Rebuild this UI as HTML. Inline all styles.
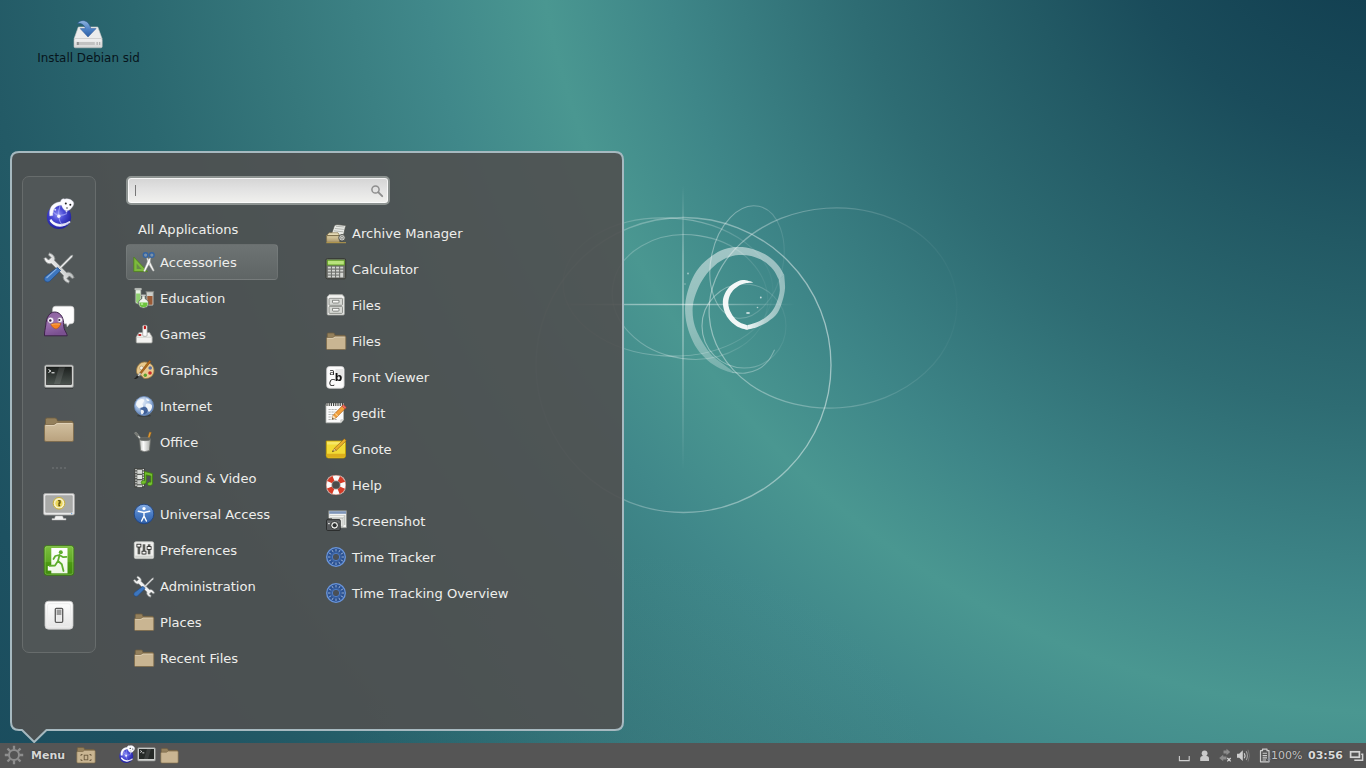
<!DOCTYPE html>
<html lang="en">
<head>
<meta charset="utf-8">
<title>Cinnamon Desktop</title>
<style>
*{box-sizing:border-box;margin:0;padding:0}
html,body{width:1366px;height:768px;overflow:hidden}
body{font-family:"DejaVu Sans","Liberation Sans",sans-serif;font-size:13.33px;color:#e8e8e8;position:relative;background:#2f6f76}
svg{position:absolute;overflow:visible}
#wall{position:absolute;left:0;top:0;width:1366px;height:768px;
 background:
  radial-gradient(ellipse 300px 240px at 640px 790px, rgba(100,170,165,0.13), rgba(100,170,165,0) 100%),
  radial-gradient(circle 1700px at 1402px -158px, #103b4d 0px, #134152 162px, #1a4c5b 300px, #225964 404px, #2e6c73 569px, #3e8688 751px, #4a9791 871px, #40888a 989px, #36787c 1134px, #2b6870 1280px, #235a66 1427px, #1d5161 1560px, #1a4c5d 1700px);
}
.dlabel{position:absolute;left:28.5px;top:50px;width:120px;text-align:center;color:#07151c;font-size:11.9px;line-height:16px}
#panel{position:absolute;left:0;top:743px;width:1366px;height:25px;background:#555555}
#fav{position:absolute;left:22px;top:176px;width:74px;height:477px;border:1px solid #676c6c;border-radius:7px;background:rgba(255,255,255,0.035)}
#search{position:absolute;left:126px;top:176px;width:264px;height:28.5px;border:2px solid #8d9391;border-radius:5px;background:linear-gradient(#d4d4d4,#e2e2e2 45%,#f1f1ee);box-shadow:inset 0 0 0 1px rgba(255,255,255,0.75)}
.cat,.app{position:absolute;height:35px;line-height:35px;font-size:13.1px;color:#eeeeec;white-space:nowrap}
.cat{left:160px}
.app{left:352px}
.sel{position:absolute;left:126px;top:244px;width:152px;height:36px;border:1px solid rgba(255,255,255,0.07);border-radius:4px;background:linear-gradient(#6d7373,#5f6565)}
.ptxt{position:absolute;top:749.3px;font-size:11px;line-height:14px;color:#dcdcdc;white-space:nowrap;text-shadow:0 0 2px rgba(0,0,0,0.55)}
</style>
</head>
<body>
<div id="wall"></div>
<svg id="wallsvg" style="left:0;top:0" width="1366" height="768" viewBox="0 0 1366 768" fill="none" stroke="#fff">
<defs>
<linearGradient id="vl" x1="0" y1="0" x2="0" y2="1"><stop offset="0" stop-color="#fff" stop-opacity="0"/><stop offset="0.25" stop-color="#fff" stop-opacity="0.4"/><stop offset="0.42" stop-color="#fff" stop-opacity="0.5"/><stop offset="1" stop-color="#fff" stop-opacity="0"/></linearGradient>
<linearGradient id="hl" x1="0" y1="0" x2="1" y2="0"><stop offset="0" stop-color="#fff" stop-opacity="0"/><stop offset="0.3" stop-color="#fff" stop-opacity="0.4"/><stop offset="0.55" stop-color="#fff" stop-opacity="0.5"/><stop offset="1" stop-color="#fff" stop-opacity="0"/></linearGradient>
<linearGradient id="g1" gradientUnits="userSpaceOnUse" x1="536" y1="0" x2="832" y2="0"><stop offset="0" stop-color="#fff" stop-opacity="0.12"/><stop offset="0.5" stop-color="#fff" stop-opacity="0.32"/><stop offset="1" stop-color="#fff" stop-opacity="0.5"/></linearGradient>
<linearGradient id="g2" gradientUnits="userSpaceOnUse" x1="709" y1="0" x2="957" y2="0"><stop offset="0" stop-color="#fff" stop-opacity="0.42"/><stop offset="0.5" stop-color="#fff" stop-opacity="0.22"/><stop offset="1" stop-color="#fff" stop-opacity="0.02"/></linearGradient>
<linearGradient id="g3" gradientUnits="userSpaceOnUse" x1="560" y1="0" x2="775" y2="0"><stop offset="0" stop-color="#fff" stop-opacity="0.1"/><stop offset="0.6" stop-color="#fff" stop-opacity="0.3"/><stop offset="1" stop-color="#fff" stop-opacity="0.02"/></linearGradient>
<linearGradient id="g6" gradientUnits="userSpaceOnUse" x1="747" y1="0" x2="782" y2="0"><stop offset="0" stop-color="#fff" stop-opacity="0.93"/><stop offset="0.5" stop-color="#fff" stop-opacity="0.6"/><stop offset="1" stop-color="#fff" stop-opacity="0.45"/></linearGradient>
<linearGradient id="g4" gradientUnits="userSpaceOnUse" x1="705" y1="0" x2="790" y2="0"><stop offset="0" stop-color="#fff" stop-opacity="0.4"/><stop offset="0.6" stop-color="#fff" stop-opacity="0.22"/><stop offset="1" stop-color="#fff" stop-opacity="0.03"/></linearGradient>
<linearGradient id="g5" gradientUnits="userSpaceOnUse" x1="0" y1="250" x2="0" y2="372"><stop offset="0" stop-color="#fff" stop-opacity="0.5"/><stop offset="0.6" stop-color="#fff" stop-opacity="0.4"/><stop offset="1" stop-color="#fff" stop-opacity="0.25"/></linearGradient>
</defs>
<rect x="682.3" y="185" width="1.4" height="285" fill="url(#vl)" stroke="none"/>
<rect x="560" y="303.8" width="235" height="1.4" fill="url(#hl)" stroke="none"/>
<circle cx="683.5" cy="365" r="147.5" stroke-width="1.3" stroke="url(#g1)"/>
<ellipse cx="833" cy="308" rx="124" ry="100" stroke-width="1.2" stroke="url(#g2)" transform="rotate(-4 833 308)"/>
<ellipse cx="668" cy="287" rx="105" ry="69" stroke-width="1.1" stroke="url(#g3)" transform="rotate(3 668 287)"/>
<ellipse cx="690" cy="297" rx="78" ry="62" stroke-width="1.1" stroke="url(#g3)" transform="rotate(8 690 297)"/>
<ellipse cx="747" cy="262" rx="36" ry="57" stroke-width="1.1" stroke="url(#g4)" transform="rotate(12 747 262)"/>
<circle cx="744" cy="326" r="42" stroke-width="1.1" stroke="url(#g4)"/>
<path d="M784.2 274.8 C783.2 273.2 781 268.5 778.3 265.4 C775.6 262.3 772.1 258.8 767.9 256 C763.8 253.3 758.2 250.7 753.3 249.2 C748.5 247.7 743.6 247.1 738.8 247.1 C733.9 247.1 728.7 247.7 724.2 249.2 C719.7 250.7 715.8 253 711.7 256 C707.5 259.1 702.6 263.2 699.2 267.5 C695.7 271.8 693.1 276.5 690.8 282.1 C688.6 287.6 686.5 294.9 685.6 300.8 C684.8 306.7 684.9 311.9 685.6 317.5 C686.3 323.1 687.9 329 689.8 334.2 C691.7 339.4 694.1 344.4 697.1 348.8 C700 353.1 703.7 356.9 707.5 360.2 C711.3 363.5 715.7 366.4 720 368.5 C724.3 370.7 731.3 372.5 733.5 373.3 L733.5 371.7 C731.6 370.3 725.7 366.1 722.1 363.3 C718.4 360.6 714.8 358.3 711.7 355 C708.5 351.7 705.8 347.4 703.3 343.5 C700.9 339.7 698.8 336.1 697.1 332.1 C695.4 328.1 694 324.1 693.3 319.6 C692.6 315.1 692.3 309.9 692.9 305 C693.5 300.1 695.2 295.1 697.1 290.4 C699 285.7 701.4 281 704.4 276.9 C707.3 272.7 711.1 268.5 714.8 265.4 C718.4 262.3 722.3 259.9 726.2 258.1 C730.2 256.4 734.6 255.3 738.8 255 C742.9 254.7 747.1 255 751.2 256 C755.4 257.1 760.1 259 763.8 261.2 C767.4 263.5 770.6 266.5 773.1 269.6 C775.6 272.6 777.8 277.9 778.8 279.6 Z" fill="url(#g5)" stroke="none"/>
<path d="M784.2 274.8 C784.3 277 785.3 284 785 288.3 C784.7 292.7 783.8 296.7 782.5 300.8 C781.2 305 779.7 309.9 777.3 313.3 C774.9 316.8 771.2 319.4 767.9 321.7 C764.6 323.9 761 325.6 757.5 326.9 C754 328.2 748.8 329.1 747.1 329.6 L747.5 325 C748.8 324.6 752.5 323.9 755.4 322.7 C758.3 321.5 761.9 320 764.8 317.9 C767.7 315.8 770.6 313.1 772.7 310.2 C774.8 307.4 776.1 304.1 777.3 300.8 C778.5 297.5 779.5 294 779.8 290.4 C780 286.9 778.9 281.4 778.8 279.6 Z" fill="url(#g6)" stroke="none"/>
<path d="M747.5 330 C745.7 329.4 739.9 328.2 736.7 326.2 C733.5 324.3 730.5 321.4 728.3 318.5 C726.2 315.7 724.6 312.5 723.8 309.2 C722.9 305.9 722.5 302 723.1 298.8 C723.7 295.5 725.4 292 727.3 289.4 C729.2 286.8 732 284.7 734.6 283.1 C737.2 281.6 739.9 280.2 742.9 280 C746 279.8 751.2 281.7 752.9 282.1 L752.9 282.5 C751.5 282.7 746.8 282.9 744.4 283.5 C741.9 284.2 740.2 284.9 738.1 286.2 C736 287.6 733.4 289.8 731.9 291.9 C730.3 294 729.3 296.2 728.8 298.8 C728.2 301.3 728.1 304.3 728.8 307.1 C729.4 309.9 730.8 312.9 732.5 315.4 C734.2 317.9 736.7 320.4 739.2 322.1 C741.7 323.8 746.1 324.9 747.5 325.4 Z" fill="#fff" fill-opacity="0.93" stroke="none"/>
<path d="M732.5 372.3 C734.6 372.4 740.8 373.6 745 373.1 C749.2 372.7 753.7 371.6 757.5 369.6 C761.3 367.6 765.1 364.5 767.9 361.2 C770.8 358 773.5 351.7 774.6 349.8" stroke-width="1.1" stroke-opacity="0.3"/>
<circle cx="760.8" cy="297.5" r="0.9" fill="#fff" fill-opacity="0.7" stroke="none"/><circle cx="757.5" cy="307.5" r="0.8" fill="#fff" fill-opacity="0.6" stroke="none"/><ellipse cx="748" cy="313" rx="2" ry="0.9" fill="#fff" fill-opacity="0.7" stroke="none"/><circle cx="688" cy="273.5" r="0.9" fill="#fff" fill-opacity="0.5" stroke="none"/><circle cx="685" cy="284" r="0.8" fill="#fff" fill-opacity="0.4" stroke="none"/>
</svg>
<!-- desktop icon -->
<svg style="left:72px;top:18px" width="32" height="32" viewBox="0 0 32 32">
 <defs><linearGradient id="dr1" x1="0" y1="0" x2="0" y2="1"><stop offset="0" stop-color="#f3f3f3"/><stop offset="1" stop-color="#d4d4d4"/></linearGradient>
 <linearGradient id="ar1" x1="0" y1="0" x2="0" y2="1"><stop offset="0" stop-color="#8fb4de"/><stop offset="0.55" stop-color="#4a7fc4"/><stop offset="1" stop-color="#2d5fa3"/></linearGradient></defs>
 <path d="M6.3 9 H25.8 L30.2 21 H2 Z" fill="#ececec" stroke="#c8c8c8" stroke-width="0.6"/>
 <rect x="2" y="20.6" width="28.2" height="9.2" rx="1.3" fill="url(#dr1)" stroke="#bdbdbd" stroke-width="0.6"/>
 <rect x="4.8" y="24" width="18" height="3" fill="#c2c2c2"/><rect x="4.8" y="24" width="2" height="3" fill="#8e8e8e"/>
 <rect x="24.5" y="24" width="1.3" height="3" fill="#b0b0b0"/><rect x="27" y="24" width="1.3" height="3" fill="#b0b0b0"/>
 <path d="M5.4 5.4 C8 1.5 16.5 0.5 18.8 10.6 H24.1 L16 19 L8.2 10.6 H13.3 C12.5 6.5 9 5 5.4 5.4 Z" fill="url(#ar1)" stroke="#2a5594" stroke-width="0.5"/>
</svg>
<div class="dlabel">Install Debian sid</div>
<!-- menu -->
<svg style="left:0;top:0" width="640" height="768" viewBox="0 0 640 768">
 <path d="M19 152 H615 Q623 152 623 160 V722 Q623 730 615 730 H46.5 L34.2 742 L22 730 H19 Q11 730 11 722 V160 Q11 152 19 152 Z" fill="rgba(80,80,80,0.9)" stroke="#a6b9c0" stroke-width="2" stroke-linejoin="round"/>
</svg>
<div id="fav"></div>
<div id="search"></div>
<div style="position:absolute;left:135px;top:185px;width:1px;height:11px;background:#777"></div>
<svg style="left:370px;top:184px" width="14" height="14" viewBox="0 0 14 14">
 <circle cx="5.5" cy="5.5" r="3.6" fill="none" stroke="#8e8e8e" stroke-width="1.5"/>
 <path d="M8.2 8.2 L12.2 12.2" stroke="#8e8e8e" stroke-width="1.9" stroke-linecap="round"/>
</svg>
<div class="sel"></div>
<!-- favourites -->
<svg style="left:43px;top:196px" width="32" height="36" viewBox="0 0 32 36">
 <defs><radialGradient id="gl1" cx="0.45" cy="0.4" r="0.65"><stop offset="0" stop-color="#8d8ff2"/><stop offset="0.4" stop-color="#4a4bd6"/><stop offset="1" stop-color="#1a1a96"/></radialGradient></defs>
 <circle cx="16" cy="20.9" r="12.2" fill="url(#gl1)"/>
 <path d="M6.5 24 C9 30.5 18 33.5 27 27 C20 31 12 29.5 8.5 23 Z" fill="#eef0ff" opacity="0.95"/>
 <path d="M8 25 C13 30 21 30 26.5 26" stroke="#fff" stroke-width="1.8" fill="none" opacity="0.85" stroke-linecap="round"/>
 <path d="M9 14 C12 19 17 21 24 17.5 M17 10 C14.5 17 15.5 24 19 29" stroke="#b9bcff" stroke-width="1.1" fill="none" opacity="0.6"/>
 <circle cx="15.8" cy="20.3" r="1.7" fill="#fff" opacity="0.9"/><circle cx="12.2" cy="13.8" r="1" fill="#fff" opacity="0.8"/><circle cx="23.5" cy="15.5" r="0.9" fill="#fff" opacity="0.8"/>
 <path d="M6.8 20 C5.5 12 9.5 6.5 17.5 5.8 C18 3.5 20 2 21.8 3.2 C24 2.2 27.5 3 29.5 5 C31.5 6.5 31 9.5 28.5 12 C26.5 14.5 23.5 15.5 21.5 14 C19.5 12.5 19 10.5 18.5 9.2 C13.5 9 9.5 12.5 9.8 19.5 Z" fill="#fbfbff" stroke="#d4d4e6" stroke-width="0.4"/>
 <circle cx="22.8" cy="7.6" r="1" fill="#222"/><circle cx="27.3" cy="8.7" r="1" fill="#222"/><ellipse cx="24" cy="12" rx="0.9" ry="0.7" fill="#555"/>
</svg>
<svg style="left:43px;top:251px" width="32" height="32" viewBox="0 0 32 32">
 <defs><linearGradient id="mt1" x1="0" y1="0" x2="1" y2="1"><stop offset="0" stop-color="#fdfdfd"/><stop offset="1" stop-color="#b9bdbd"/></linearGradient></defs>
 <g transform="rotate(-45 16 17)">
  <path d="M13.8 8.5 C11.5 7.5 10.8 5 11.2 2.5 L12 -0.5 L14.2 0.3 V4 H17.8 V0.3 L20 -0.5 L20.8 2.5 C21.2 5 20.5 7.5 18.2 8.5 V25.5 C20.5 26.5 21.2 29 20.8 31.5 L20 34.5 L17.8 33.7 V30 H14.2 V33.7 L12 34.5 L11.2 31.5 C10.8 29 11.5 26.5 13.8 25.5 Z" fill="url(#mt1)" stroke="#858989" stroke-width="0.8" stroke-linejoin="round"/>
 </g>
 <path d="M29.8 4 L28 4.6 L15.2 17.4 L16.6 18.8 L29.4 6 Z" fill="#eeeeee" stroke="#8c9090" stroke-width="0.6"/>
 <path d="M14.4 16.4 L17.6 19.6 L7 30 C5.5 31.4 3.2 31.2 2 29.9 C0.8 28.5 1 26.5 2.5 25.2 Z" fill="#3d76be" stroke="#204a87" stroke-width="0.7"/>
 <path d="M3.5 27 L13.5 17.8" stroke="#9cc0ec" stroke-width="1.1" opacity="0.8"/>
</svg>
<svg style="left:43px;top:305px" width="32" height="32" viewBox="0 0 32 32">
 <defs><linearGradient id="pg1" x1="0" y1="0" x2="0.3" y2="1"><stop offset="0" stop-color="#8a5e9c"/><stop offset="0.5" stop-color="#9a70ae"/><stop offset="1" stop-color="#7a5090"/></linearGradient></defs>
 <path d="M12.6 1.2 H28 Q31 1.2 31 4.2 V15.8 Q31 18.8 28 18.8 H26.6 L24.2 21.8 L23.6 18.8 H12.6 Q9.6 18.8 9.6 15.8 V4.2 Q9.6 1.2 12.6 1.2 Z" fill="#fdfdfd" stroke="#cfcfcf" stroke-width="0.6"/>
 <path d="M1.5 30.8 C1.3 27 2.3 24 2.8 20 C3.2 12.5 6.5 7 11.5 7 C16.5 7 20 11 20.6 17.5 C20.8 20.5 20.5 22.5 22 25.5 C23 27.5 24 29 24.2 30.8 Z" fill="url(#pg1)" stroke="#3c2248" stroke-width="1"/>
 <circle cx="7.7" cy="15.3" r="3.1" fill="#fbf4ff" stroke="#5e3c6c" stroke-width="0.4"/><circle cx="17" cy="14.9" r="2.6" fill="#fbf4ff" stroke="#5e3c6c" stroke-width="0.4"/>
 <circle cx="7.3" cy="15.4" r="1.25" fill="#3a2344"/><circle cx="16.3" cy="15" r="1.1" fill="#3a2344"/>
 <path d="M7.8 19.3 C10 18 15 17.8 17.8 18.6 C17 21.5 15 23.6 13 24 C10.5 23.5 8.5 21.5 7.8 19.3 Z" fill="#f58220" stroke="#a8500a" stroke-width="0.5"/>
 <path d="M8.6 19.6 C11 18.9 15 18.8 17 19.2" stroke="#fbb060" stroke-width="0.9" fill="none"/>
</svg>
<svg style="left:43px;top:360px" width="32" height="32" viewBox="0 0 32 32">
 <defs><linearGradient id="tm1" x1="0" y1="0" x2="0" y2="1"><stop offset="0" stop-color="#1c201e"/><stop offset="1" stop-color="#4a524e"/></linearGradient></defs>
 <rect x="2" y="27.6" width="28" height="1.5" rx="0.7" fill="#000" opacity="0.3"/>
 <rect x="1.6" y="5" width="28.8" height="22.6" rx="1.8" fill="#d6d8d6" stroke="#8a8c8a" stroke-width="0.8"/>
 <rect x="3.6" y="7" width="24.8" height="17.4" fill="url(#tm1)" stroke="#111" stroke-width="0.6"/>
 <path d="M16 7.3 L22 7.3 L17 24 L11 24 Z" fill="#fff" opacity="0.1"/>
 <path d="M5.5 9.5 L7.8 11 L5.5 12.5" stroke="#fff" stroke-width="1" fill="none"/><rect x="8.5" y="12.3" width="3" height="1" fill="#fff"/>
</svg>
<svg style="left:43px;top:414px" width="32" height="32" viewBox="0 0 32 32">
 <defs><linearGradient id="fd1" x1="0" y1="0" x2="0" y2="1"><stop offset="0" stop-color="#d2c0a0"/><stop offset="1" stop-color="#b9a27e"/></linearGradient></defs>
 <path d="M2.5 5.5 Q2.5 4 4 4 H12 Q13.5 4 14 5.5 L14.5 7 H28.5 Q30 7 30 8.5 V12 H2.5 Z" fill="#94805c" stroke="#6f5d3f" stroke-width="0.8"/>
 <path d="M1.5 12 Q1.5 10.5 3 10.5 H11 L14 8.5 H29 Q30.5 8.5 30.5 10 V26 Q30.5 27.5 29 27.5 H3 Q1.5 27.5 1.5 26 Z" fill="url(#fd1)" stroke="#7d6a49" stroke-width="0.8"/>
 <path d="M2.5 12 Q2.5 11.5 3 11.5 H11.3 L14.3 9.5 H29 Q29.5 9.5 29.5 10" stroke="#e6dac2" stroke-width="0.7" fill="none"/>
</svg>

<svg style="left:43px;top:489px" width="32" height="32" viewBox="0 0 32 32">
 <rect x="0.6" y="4.6" width="30.8" height="21.4" rx="1.5" fill="#e9e9e9" stroke="#a4a4a4" stroke-width="0.8"/>
 <rect x="2.8" y="6.8" width="26.4" height="16.4" fill="#a9aaa8" stroke="#8a8a8a" stroke-width="0.5"/>
 <circle cx="28.7" cy="24.6" r="0.6" fill="#4a90d9"/>
 <path d="M12.5 27 H19.5 L20.5 29.5 H23 V31 H9 V29.5 H11.5 Z" fill="#f2f2f2" stroke="#b0b0b0" stroke-width="0.5"/>
 <circle cx="16" cy="14.3" r="5.8" fill="#f6f0c8" stroke="#c9b037" stroke-width="1"/>
 <circle cx="16" cy="14.3" r="3.6" fill="#ead55a"/>
 <path d="M15 11.8 H17 V14 H16 V16.8 H17.2" stroke="#4a3d00" stroke-width="1.1" fill="none"/>
</svg>
<svg style="left:43px;top:544px" width="32" height="32" viewBox="0 0 32 32">
 <defs><linearGradient id="lo1" x1="0" y1="0" x2="0" y2="1"><stop offset="0" stop-color="#7cc03e"/><stop offset="0.55" stop-color="#5ea824"/><stop offset="0.57" stop-color="#4c9a12"/><stop offset="1" stop-color="#3f8a0e"/></linearGradient>
 <linearGradient id="lo2" x1="0" y1="0" x2="0" y2="1"><stop offset="0" stop-color="#ffffff"/><stop offset="1" stop-color="#eef6e6"/></linearGradient></defs>
 <rect x="1.2" y="1.7" width="29.6" height="29.6" rx="2.5" fill="url(#lo1)" stroke="#3a7a10" stroke-width="0.8"/>
 <rect x="2.2" y="2.7" width="27.6" height="27.6" rx="1.8" fill="none" stroke="#a8dc78" stroke-width="0.7" opacity="0.6"/>
 <rect x="8.3" y="4" width="16.2" height="25.3" fill="url(#lo2)"/>
 <rect x="4.8" y="22" width="4.5" height="4.6" fill="#f6faf2"/>
 <circle cx="17.8" cy="8.3" r="2" fill="#5fae2e"/>
 <path d="M16.3 11 L12.3 12 L10.5 15 M16.3 11 L20.3 13.2 L23.5 12.8 M16.5 11.2 L15 17 L18.8 20.2 L20.5 27 M15 17 L12 21.5 L6.5 21.8" stroke="#5fae2e" stroke-width="1.8" fill="none" stroke-linecap="round" stroke-linejoin="round"/>
</svg>
<svg style="left:43px;top:599px" width="32" height="32" viewBox="0 0 32 32">
 <defs><linearGradient id="sd1" x1="0" y1="0" x2="0" y2="1"><stop offset="0" stop-color="#ffffff"/><stop offset="1" stop-color="#e4e4e4"/></linearGradient></defs>
 <rect x="2" y="2.2" width="28" height="28" rx="3.5" fill="url(#sd1)" stroke="#c6c6c6" stroke-width="0.8"/>
 <rect x="4.5" y="4.7" width="23" height="23" rx="2" fill="none" stroke="#ededed" stroke-width="1"/>
 <rect x="12.3" y="9.3" width="7.4" height="14" rx="1" fill="#f6f6f6" stroke="#5a5a5a" stroke-width="1.3"/>
 <rect x="13.6" y="10.6" width="4.8" height="5.5" fill="#9a9a9a"/>
 <rect x="13.6" y="16.1" width="4.8" height="5.9" fill="#e9e9e9"/>
</svg>

<div style="position:absolute;left:52px;top:467px;width:15px;height:2px;background:repeating-linear-gradient(90deg,rgba(255,255,255,0.1) 0 2px,transparent 2px 4px)"></div>
<!-- category icons -->
<svg style="left:133px;top:251px" width="22" height="22" viewBox="0 0 22 22">
 <path d="M0.8 20.6 V6 L14.6 20.6 Z" fill="#7cba3c" stroke="#4e7f1c" stroke-width="0.8" stroke-linejoin="round"/>
 <path d="M3.6 17.9 V12.6 L8.6 17.9 Z" fill="#5a6a52" opacity="0.6"/>
 <path d="M13.6 6.2 L15.9 8.2 L21.3 19.4 L20 20.3 L14.5 11.5 Z" fill="#f4f4f2" stroke="#9a9c98" stroke-width="0.5"/>
 <path d="M17.8 6.2 L15.5 8.2 L10.5 20 L11.9 20.8 L17 11.5 Z" fill="#ffffff" stroke="#9a9c98" stroke-width="0.5"/>
 <circle cx="12.6" cy="4.1" r="2.3" fill="#8fb3e0" fill-opacity="0.5" stroke="#3465a4" stroke-width="1.4"/>
 <circle cx="18.8" cy="4.1" r="2.3" fill="#8fb3e0" fill-opacity="0.5" stroke="#3465a4" stroke-width="1.4"/>
</svg>
<svg style="left:133px;top:287px" width="22" height="22" viewBox="0 0 22 22">
 <path d="M12.8 4.8 H21 L20.3 5.8 V17 Q20.3 18.5 18.8 18.5 H15 Q13.5 18.5 13.5 17 V5.8 Z" fill="#e4e6e2" fill-opacity="0.85" stroke="#8a8d88" stroke-width="0.8"/>
 <path d="M14.3 9 H19.5 V16.8 Q19.5 17.7 18.6 17.7 H15.2 Q14.3 17.7 14.3 16.8 Z" fill="#9a5a36"/>
 <path d="M2.3 2.3 H8 V14.5 Q8 17 5.15 17 Q2.3 17 2.3 14.5 Z" fill="#e8f2e4" stroke="#7a7e7a" stroke-width="0.8"/>
 <path d="M3.1 6.5 H7.2 V14.4 Q7.2 16.2 5.15 16.2 Q3.1 16.2 3.1 14.4 Z" fill="#8fd070"/>
 <rect x="1.6" y="1.2" width="7.1" height="1.6" rx="0.6" fill="#f4f7f4" stroke="#7a7e7a" stroke-width="0.5"/>
 <path d="M8.8 8.2 H12.2 V11.8 C15 13 16 15.5 15.3 17.8 C14.5 20 12.5 21 10.5 21 C8.5 21 6.5 20 5.7 17.8 C5 15.5 6 13 8.8 11.8 Z" fill="#eef4ec" stroke="#5e635f" stroke-width="0.8"/>
 <path d="M6.5 15.5 H14.5 C14.9 17 14.3 18.6 13.3 19.4 C12.5 20 11.5 20.2 10.5 20.2 C9.5 20.2 8.5 20 7.7 19.4 C6.7 18.6 6.1 17 6.5 15.5 Z" fill="#6cc43e"/>
 <ellipse cx="9" cy="17" rx="1.3" ry="0.9" fill="#c6f0a8" opacity="0.8"/>
 <rect x="8.1" y="7.5" width="4.8" height="1.4" rx="0.5" fill="#f6f8f6" stroke="#5e635f" stroke-width="0.5"/>
</svg>
<svg style="left:133px;top:323px" width="22" height="22" viewBox="0 0 22 22">
 <path d="M3.2 14 L6 9.5 H16.5 L19.2 14 V19 Q19.2 20 18.2 20 H4.2 Q3.2 20 3.2 19 Z" fill="#f3f3f1" stroke="#9a9c98" stroke-width="0.8"/>
 <path d="M3.6 14.2 H18.8" stroke="#c9cbc7" stroke-width="0.8"/>
 <rect x="9.7" y="2.3" width="4.4" height="11" rx="1.2" fill="#fafafa" stroke="#9a9c98" stroke-width="0.7"/>
 <rect x="10.8" y="2.8" width="2.2" height="3.4" rx="0.9" fill="#c01818"/>
 <ellipse cx="6.8" cy="12" rx="1.7" ry="1.1" fill="#b21818"/>
</svg>
<svg style="left:133px;top:359px" width="22" height="22" viewBox="0 0 22 22">
 <path d="M11.5 3 C17 3 21 6.5 21 11.5 C21 16.5 17 19.5 12.5 19.5 C9.5 19.5 9.8 17.2 8 16.5 C6 15.8 3.5 16 3.5 12 C3.5 7 7 3 11.5 3 Z" fill="#e9c98e" stroke="#9c7a3c" stroke-width="0.8"/>
 <circle cx="8.5" cy="9" r="1.9" fill="#f4f0e6" stroke="#9c7a3c" stroke-width="0.5"/>
 <circle cx="17.2" cy="9" r="1.8" fill="#5a6f9e"/>
 <circle cx="17" cy="14" r="1.8" fill="#cc2a2a"/>
 <circle cx="12.3" cy="16.2" r="1.7" fill="#5aa02c"/>
 <circle cx="13.5" cy="6.2" r="1.5" fill="#e6d04a"/>
 <path d="M16.5 1.2 L18 2.4 L8.2 14.8 L6.8 13.8 Z" fill="#b3691f" stroke="#6e3f0f" stroke-width="0.5"/>
 <path d="M8.2 14.8 L6.8 13.8 L4.5 16.5 L5.8 17.5 Z" fill="#cfd2cf" stroke="#777" stroke-width="0.4"/>
 <path d="M5.8 17.5 L4.5 16.5 C3 17.5 2.5 19.2 0.8 19.8 C3 20.5 5 19.5 5.8 17.5 Z" fill="#222"/>
</svg>
<svg style="left:133px;top:395px" width="22" height="22" viewBox="0 0 22 22">
 <defs><radialGradient id="in1" cx="0.4" cy="0.3" r="0.75"><stop offset="0" stop-color="#e4ecf8"/><stop offset="0.55" stop-color="#9db8de"/><stop offset="1" stop-color="#4a6ea8"/></radialGradient></defs>
 <ellipse cx="11" cy="20.8" rx="7" ry="1" fill="#000" opacity="0.25"/>
 <circle cx="11" cy="11" r="9.5" fill="url(#in1)" stroke="#6f8fc0" stroke-width="0.8"/>
 <path d="M7.5 13 C9 11 13 11.5 14.5 13.5 C15.5 16 13.5 19 11 19.3 C9 18 7 15.5 7.5 13 Z" fill="#34558f" opacity="0.85"/>
 <path d="M5 5.5 C7 4 9.5 3.5 11 4.5 C12 6 10 7 9.5 8.5 C9 10 11 10.5 10 12 C9 13 7 12 6 13.5 C5 12 3.5 11.5 3 9.5 C3.2 8 4 6.5 5 5.5 Z M13 9 C15 8 17.5 8.5 19 10.5 C19.5 13 18 15.5 16 17 C14.5 16 15 14 14 13 C12.5 12 12 10 13 9 Z M8 15 C9.5 14.5 11 15.5 11 17 C10.5 18.5 9.5 19.5 8.5 19.5 C8 18 7.5 16.5 8 15 Z M13 3.5 C14.5 3.3 16 4.5 16.5 5.5 C15.5 6.5 14 6 13.5 5 Z" fill="#f6f8fa" opacity="0.95"/>
</svg>
<svg style="left:133px;top:431px" width="22" height="22" viewBox="0 0 22 22">
 <defs><linearGradient id="of1" x1="0" y1="0" x2="1" y2="0"><stop offset="0" stop-color="#b8bab6"/><stop offset="0.35" stop-color="#fbfbfb"/><stop offset="1" stop-color="#a9aba7"/></linearGradient></defs>
 <path d="M16.5 1 L18.3 1.6 L15 11 L13.5 10.5 Z" fill="#e9a13a" stroke="#9a6414" stroke-width="0.5"/>
 <path d="M1.5 2 L3 1 L10.5 10 L9 11.2 Z" fill="#d4d7d3" stroke="#6c6f6b" stroke-width="0.5"/>
 <path d="M1.2 2.2 L3.4 0.8 L6 4.5 L4 6 Z" fill="#777a76"/>
 <path d="M6.5 8 L7.5 19.5 Q11.5 21.8 16.5 19.5 L17.5 8 Z" fill="url(#of1)" stroke="#6c6f6b" stroke-width="0.8"/>
 <ellipse cx="12" cy="8" rx="5.5" ry="1.7" fill="#5d605c" stroke="#6c6f6b" stroke-width="0.7"/>
</svg>
<svg style="left:133px;top:467px" width="22" height="22" viewBox="0 0 22 22">
 <rect x="1.8" y="1.5" width="9.7" height="19" fill="#5a5d59" stroke="#3c3f3b" stroke-width="0.6"/>
 <path d="M3 2 V20 M10.3 2 V20" stroke="#e6e6e6" stroke-width="1.2" stroke-dasharray="1.3 1.3"/>
 <rect x="4.3" y="2.8" width="4.7" height="4" fill="#d6d9d5"/><rect x="4.3" y="8" width="4.7" height="4" fill="#e2e5e1"/><rect x="4.3" y="13.2" width="4.7" height="4" fill="#c6c9c5"/><rect x="4.3" y="18.3" width="4.7" height="1.8" fill="#d6d9d5"/>
 <path d="M11.5 4.5 L19.5 6.5 V16.5 C19.5 19 14.5 19.5 14.5 17 C14.5 15 17.5 14.8 17.8 15.2 V9 L13.2 7.9 V15 C13.2 17.5 8.2 18 8.2 15.5 C8.2 13.5 11.2 13.3 11.5 13.7 Z" fill="#73c02e" stroke="#3f7d0e" stroke-width="0.8"/>
</svg>
<svg style="left:133px;top:503px" width="22" height="22" viewBox="0 0 22 22">
 <defs><linearGradient id="ua1" x1="0" y1="0" x2="0" y2="1"><stop offset="0" stop-color="#86aee6"/><stop offset="0.5" stop-color="#4a7cc4"/><stop offset="1" stop-color="#2f5fa8"/></linearGradient></defs>
 <circle cx="11" cy="11" r="9.8" fill="url(#ua1)" stroke="#1f4480" stroke-width="0.9"/>
 <circle cx="11" cy="5.6" r="1.7" fill="#fff"/>
 <path d="M5.3 8.3 L11 9.5 L16.7 8.3 M11 9.5 V13 M11 13 L8.6 18 M11 13 L13.4 18" stroke="#fff" stroke-width="1.4" stroke-linecap="round" stroke-linejoin="round" fill="none"/>
</svg>
<svg style="left:133px;top:539px" width="22" height="22" viewBox="0 0 22 22">
 <rect x="1.3" y="2.8" width="19.4" height="16.8" rx="1.5" fill="#f0f0ee" stroke="#c4c6c2" stroke-width="0.8"/>
 <rect x="2.2" y="16.6" width="17.6" height="2.2" fill="#d2d4d0"/>
 <rect x="4.6" y="5.3" width="2.6" height="10" fill="#5a5c58"/><rect x="9.7" y="5.3" width="2.6" height="10" fill="#5a5c58"/><rect x="14.8" y="5.3" width="2.6" height="10" fill="#5a5c58"/>
 <rect x="3.9" y="5.2" width="4" height="2.8" fill="#f6f6f4" stroke="#1e1f1d" stroke-width="0.8"/>
 <rect x="9" y="12.2" width="4" height="2.8" fill="#f6f6f4" stroke="#1e1f1d" stroke-width="0.8"/>
 <rect x="14.1" y="7.6" width="4" height="2.8" fill="#f6f6f4" stroke="#1e1f1d" stroke-width="0.8"/>
</svg>
<svg style="left:133px;top:575px" width="22" height="22" viewBox="0 0 32 32">
 <g transform="rotate(-45 16 17)">
  <path d="M13.5 8.5 C11.2 7.5 10.5 5 10.9 2.5 L11.7 -0.5 L14 0.3 V4 H18 V0.3 L20.3 -0.5 L21.1 2.5 C21.5 5 20.8 7.5 18.5 8.5 V25.5 C20.8 26.5 21.5 29 21.1 31.5 L20.3 34.5 L18 33.7 V30 H14 V33.7 L11.7 34.5 L10.9 31.5 C10.5 29 11.2 26.5 13.5 25.5 Z" fill="#f2f2f2" stroke="#858989" stroke-width="0.9" stroke-linejoin="round"/>
 </g>
 <path d="M29.8 4 L28 4.6 L15.2 17.4 L16.6 18.8 L29.4 6 Z" fill="#eeeeee" stroke="#8c9090" stroke-width="0.7"/>
 <path d="M14.4 16.4 L17.6 19.6 L7 30 C5.5 31.4 3.2 31.2 2 29.9 C0.8 28.5 1 26.5 2.5 25.2 Z" fill="#3d76be" stroke="#204a87" stroke-width="0.9"/>
</svg>
<svg style="left:133px;top:611px" width="22" height="22" viewBox="0 0 22 22">
 <path d="M2.2 4 Q2.2 3 3.2 3 H8.3 Q9.3 3 9.6 4 L9.9 5.3 H19.3 Q20.3 5.3 20.3 6.3 V9 H2.2 Z" fill="#94805c" stroke="#6f5d3f" stroke-width="0.8"/>
 <path d="M1.5 8.5 Q1.5 7.5 2.5 7.5 H7.8 L9.8 6.2 H19.8 Q20.8 6.2 20.8 7.2 V18.5 Q20.8 19.5 19.8 19.5 H2.5 Q1.5 19.5 1.5 18.5 Z" fill="#c9b592" stroke="#7d6a49" stroke-width="0.8"/>
 <path d="M2.4 8.7 Q2.4 8.4 2.8 8.4 H8.1 L10.1 7.1 H19.6" stroke="#e6dac2" stroke-width="0.6" fill="none"/>
</svg>
<svg style="left:133px;top:647px" width="22" height="22" viewBox="0 0 22 22">
 <path d="M2.2 4 Q2.2 3 3.2 3 H8.3 Q9.3 3 9.6 4 L9.9 5.3 H19.3 Q20.3 5.3 20.3 6.3 V9 H2.2 Z" fill="#94805c" stroke="#6f5d3f" stroke-width="0.8"/>
 <path d="M1.5 8.5 Q1.5 7.5 2.5 7.5 H7.8 L9.8 6.2 H19.8 Q20.8 6.2 20.8 7.2 V18.5 Q20.8 19.5 19.8 19.5 H2.5 Q1.5 19.5 1.5 18.5 Z" fill="#c9b592" stroke="#7d6a49" stroke-width="0.8"/>
 <path d="M2.4 8.7 Q2.4 8.4 2.8 8.4 H8.1 L10.1 7.1 H19.6" stroke="#e6dac2" stroke-width="0.6" fill="none"/>
</svg>
<!-- app icons -->
<svg style="left:325px;top:222px" width="22" height="22" viewBox="0 0 22 22">
 <defs><linearGradient id="am1" x1="0" y1="0" x2="0" y2="1"><stop offset="0" stop-color="#efe6c8"/><stop offset="0.35" stop-color="#d9cba0"/><stop offset="1" stop-color="#a8956a"/></linearGradient></defs>
 <path d="M9.5 3.2 L12 2.6 L21.2 3.4 L20.2 6 L17.6 17.5 L6 13 Z" fill="#e9ebe7" stroke="#4c4f4a" stroke-width="0.8" stroke-linejoin="round"/>
 <path d="M11 4.3 L19.5 5 M9.8 6.5 L18.8 7.4 M8.8 8.8 L18.2 9.8" stroke="#9a9d98" stroke-width="0.7"/>
 <path d="M1.6 13.5 L4 10.8 H13 L14.5 13.5 V19.5 Q14.5 20.3 13.7 20.3 H2.4 Q1.6 20.3 1.6 19.5 Z" fill="url(#am1)" stroke="#7f6e45" stroke-width="0.7"/>
 <path d="M2 13.6 H14.2" stroke="#6a5c3a" stroke-width="0.9"/>
 <circle cx="17" cy="15.8" r="3.3" fill="#c8cac6" stroke="#44463f" stroke-width="0.9"/>
 <circle cx="17" cy="15.8" r="1.3" fill="#e9e9e7" stroke="#55574f" stroke-width="0.6"/>
 <path d="M1.3 20.7 H21" stroke="#c5a54c" stroke-width="0.9"/>
</svg>
<svg style="left:325px;top:258px" width="22" height="22" viewBox="0 0 22 22">
 <rect x="0.9" y="0.6" width="19.8" height="20.2" rx="1.5" fill="#70726e" stroke="#33352f" stroke-width="0.9"/>
 <rect x="2.3" y="2.2" width="17" height="4.8" fill="#b9e37d" stroke="#5a9a1c" stroke-width="0.9"/>
 <g fill="#d3d5d1"><rect x="2.9" y="8.7" width="3" height="1.8"/><rect x="7" y="8.7" width="3" height="1.8"/><rect x="11.1" y="8.7" width="3" height="1.8"/><rect x="15.2" y="8.7" width="3" height="1.8"/><rect x="2.9" y="11.7" width="3" height="1.8"/><rect x="7" y="11.7" width="3" height="1.8"/><rect x="11.1" y="11.7" width="3" height="1.8"/><rect x="15.2" y="11.7" width="3" height="1.8"/><rect x="2.9" y="14.7" width="3" height="1.8"/><rect x="7" y="14.7" width="3" height="1.8"/><rect x="11.1" y="14.7" width="3" height="1.8"/><rect x="15.2" y="14.7" width="3" height="4.7"/><rect x="2.9" y="17.6" width="3" height="1.8"/><rect x="7" y="17.6" width="3" height="1.8"/><rect x="11.1" y="17.6" width="3" height="1.8"/></g>
</svg>
<svg style="left:325px;top:294px" width="22" height="22" viewBox="0 0 22 22">
 <path d="M2.2 3 L4.2 0.6 H17.3 L19.3 3 V20 Q19.3 21 18.3 21 H3.2 Q2.2 21 2.2 20 Z" fill="#eeeeec" stroke="#a6a8a4" stroke-width="0.8"/>
 <path d="M2.6 3.2 H18.9" stroke="#fff" stroke-width="0.8"/>
 <rect x="4" y="4.3" width="13.5" height="7" rx="0.8" fill="#d6d8d4" stroke="#7c7f7a" stroke-width="0.8"/>
 <rect x="4" y="12.4" width="13.5" height="7" rx="0.8" fill="#d6d8d4" stroke="#7c7f7a" stroke-width="0.8"/>
 <path d="M7.5 6.3 H14 V8.2 Q14 9 13.2 9 H8.3 Q7.5 9 7.5 8.2 Z" fill="#f7f7f5" stroke="#5f625d" stroke-width="0.7"/>
 <path d="M7.5 14.4 H14 V16.3 Q14 17.1 13.2 17.1 H8.3 Q7.5 17.1 7.5 16.3 Z" fill="#f7f7f5" stroke="#5f625d" stroke-width="0.7"/>
</svg>
<svg style="left:325px;top:330px" width="22" height="22" viewBox="0 0 22 22">
 <path d="M2.2 4 Q2.2 3 3.2 3 H8.3 Q9.3 3 9.6 4 L9.9 5.3 H19.3 Q20.3 5.3 20.3 6.3 V9 H2.2 Z" fill="#94805c" stroke="#6f5d3f" stroke-width="0.8"/>
 <path d="M1.5 8.5 Q1.5 7.5 2.5 7.5 H7.8 L9.8 6.2 H19.8 Q20.8 6.2 20.8 7.2 V18.5 Q20.8 19.5 19.8 19.5 H2.5 Q1.5 19.5 1.5 18.5 Z" fill="#c9b592" stroke="#7d6a49" stroke-width="0.8"/>
 <path d="M2.4 8.7 Q2.4 8.4 2.8 8.4 H8.1 L10.1 7.1 H19.6" stroke="#e6dac2" stroke-width="0.6" fill="none"/>
</svg>

<svg style="left:325px;top:366px;will-change:transform" width="22" height="23" viewBox="0 0 22 23">
 <rect x="1.7" y="0.5" width="17.4" height="21.8" rx="2.8" fill="#fbfbfb" stroke="#cfcfcf" stroke-width="0.8"/>
 <rect x="10.5" y="3" width="7.8" height="9" fill="#e6e6e6"/>
 <text x="4.3" y="9.3" font-family="'DejaVu Sans','Liberation Sans',sans-serif" font-size="9" fill="#111">a</text>
 <text x="9.8" y="14.8" font-family="'DejaVu Sans','Liberation Sans',sans-serif" font-weight="bold" font-size="10.5" fill="#111">b</text>
 <text x="4" y="19.8" font-family="'DejaVu Sans','Liberation Sans',sans-serif" font-style="italic" font-size="9" fill="#111">C</text>
</svg>
<svg style="left:325px;top:402px" width="22" height="22" viewBox="0 0 22 22">
 <path d="M1 2.5 H18.5 V17.8 L15.8 20.8 H1 Z" fill="#fafafa" stroke="#b4b6b2" stroke-width="0.8"/>
 <path d="M15.8 20.8 V17.8 H18.5" fill="#dcdedb" stroke="#b4b6b2" stroke-width="0.6"/>
 <rect x="1" y="1.2" width="17.5" height="3" fill="#f4f4f2"/>
 <path d="M2 0.8 V4 M4.2 0.8 V4 M6.4 0.8 V4 M8.6 0.8 V4 M10.8 0.8 V4 M13 0.8 V4 M15.2 0.8 V4 M17.4 0.8 V4" stroke="#3c3e3a" stroke-width="1.1"/>
 <path d="M3.5 7.5 H12 M3.5 10 H10.5 M3.5 12.5 H8.5 M3.5 15 H7 M3.5 17.5 H12" stroke="#a9aba7" stroke-width="0.9" stroke-dasharray="2.2 0.8"/>
 <path d="M18.3 2.8 L21.2 5.6 L10.8 16 L7.4 17.2 L8.2 13.3 Z" fill="#f3a03c" stroke="#a85a10" stroke-width="0.7"/>
 <path d="M10.2 11.3 L12.8 13.9" stroke="#fbd08a" stroke-width="1.2"/>
 <path d="M18.3 2.8 L21.2 5.6 L19.9 6.9 L17 4.1 Z" fill="#ef6f6f" stroke="#a83030" stroke-width="0.5"/>
 <path d="M8.2 13.3 L10.8 16 L7.4 17.2 Z" fill="#f6e3bf"/><path d="M7.4 17.2 L8.7 16.8 L7.7 15.7 Z" fill="#111"/>
</svg>
<svg style="left:325px;top:438px" width="22" height="22" viewBox="0 0 22 22">
 <path d="M1.3 3 H20.5 V17.8 Q20.5 20 18.3 20 H3.5 Q1.3 20 1.3 17.8 Z" fill="#f2db36" stroke="#c4a000" stroke-width="0.8"/>
 <path d="M1.7 15.8 H20.1 V17.8 Q20.1 19.6 18.3 19.6 H3.5 Q1.7 19.6 1.7 17.8 Z" fill="#dcae1c"/>
 <path d="M2 3.7 H19.8 V6.5 H2 Z" fill="#f9ec7a" opacity="0.7"/>
 <path d="M19.3 0.8 L21.3 2.7 L11.3 12.3 L9.3 10.4 Z" fill="#eab02a" stroke="#8a5a14" stroke-width="0.6"/>
 <path d="M9.3 10.4 L11.3 12.3 L7.3 13.8 Z" fill="#e6c98c" stroke="#8a5a14" stroke-width="0.4"/>
 <path d="M7.3 13.8 L8.9 13.2 L7.9 12.2 Z" fill="#111"/>
</svg>
<svg style="left:325px;top:474px" width="22" height="22" viewBox="0 0 22 22">
 <rect x="1.2" y="1.2" width="19.6" height="19.6" rx="8" fill="#f4d7d2" opacity="0.9"/>
 <circle cx="11" cy="11" r="6.9" fill="none" stroke="#fbfbfb" stroke-width="5.6"/>
 <circle cx="11" cy="11" r="6.9" fill="none" stroke="#d63a26" stroke-width="5.6" stroke-dasharray="5.42 5.42" stroke-dashoffset="-2.71"/>
 <circle cx="11" cy="11" r="9.8" fill="none" stroke="#b24a3a" stroke-width="0.6" opacity="0.7"/>
 <circle cx="11" cy="11" r="4.1" fill="#4a4c4c" stroke="#9a8a88" stroke-width="0.7"/>
</svg>
<svg style="left:325px;top:510px" width="22" height="22" viewBox="0 0 22 22">
 <rect x="3.8" y="0.8" width="17.6" height="17" fill="#f2f3f1" stroke="#8a8d88" stroke-width="0.7"/>
 <rect x="4.2" y="1.2" width="16.8" height="2.6" fill="#7d95b8"/>
 <path d="M5 5.5 H20 M5 7.5 H20" stroke="#c9ccc7" stroke-width="0.8"/>
 <rect x="6.5" y="8.5" width="11.5" height="8" fill="#e3e5e1" stroke="#a0a39e" stroke-width="0.5"/>
 <rect x="18.8" y="5" width="1.6" height="10" fill="#c4c7c2"/>
 <rect x="1.5" y="9.5" width="13.8" height="11" rx="1.3" fill="#55585a" stroke="#232524" stroke-width="0.8"/>
 <rect x="2.8" y="8.3" width="4" height="1.8" fill="#3a3c3b"/>
 <path d="M2 12 H15" stroke="#7a7d7e" stroke-width="0.7"/>
 <circle cx="9.6" cy="15.3" r="3.9" fill="#e4e5e3" stroke="#1c1d1c" stroke-width="0.8"/>
 <circle cx="9.6" cy="15.3" r="2" fill="#2c2e2e"/>
 <rect x="3" y="13" width="1.8" height="1.2" fill="#ddd"/>
</svg>
<svg style="left:325px;top:546px" width="22" height="22" viewBox="0 0 22 22">
 <circle cx="11" cy="11" r="9.3" fill="#345c9e" stroke="#6a96dc" stroke-width="1.3"/>
 <circle cx="11" cy="11" r="7" fill="none" stroke="#274a86" stroke-width="2.8" opacity="0.55"/>
 <path d="M11 5.4 L11 3 M13.8 6.15 L15 4.07 M15.85 8.2 L17.93 7 M16.6 11 L19 11 M15.85 13.8 L17.93 15 M13.8 15.85 L15 17.93 M11 16.6 L11 19 M8.2 15.85 L7 17.93 M6.15 13.8 L4.07 15 M5.4 11 L3 11 M6.15 8.2 L4.07 7 M8.2 6.15 L7 4.07" stroke="#dfe9fa" stroke-width="0.7" opacity="0.85"/>
 <circle cx="11" cy="11" r="3.7" fill="#4a5058" stroke="#4f7dc6" stroke-width="1"/>
</svg>

<svg style="left:325px;top:582px" width="22" height="22" viewBox="0 0 22 22">
 <circle cx="11" cy="11" r="9.3" fill="#345c9e" stroke="#6a96dc" stroke-width="1.3"/>
 <circle cx="11" cy="11" r="7" fill="none" stroke="#274a86" stroke-width="2.8" opacity="0.55"/>
 <path d="M11 5.4 L11 3 M13.8 6.15 L15 4.07 M15.85 8.2 L17.93 7 M16.6 11 L19 11 M15.85 13.8 L17.93 15 M13.8 15.85 L15 17.93 M11 16.6 L11 19 M8.2 15.85 L7 17.93 M6.15 13.8 L4.07 15 M5.4 11 L3 11 M6.15 8.2 L4.07 7 M8.2 6.15 L7 4.07" stroke="#dfe9fa" stroke-width="0.7" opacity="0.85"/>
 <circle cx="11" cy="11" r="3.7" fill="#4a5058" stroke="#4f7dc6" stroke-width="1"/>
</svg>

<div class="cat" style="left:138px;top:212px">All Applications</div>
<div class="cat" style="top:245px">Accessories</div>
<div class="cat" style="top:281px">Education</div>
<div class="cat" style="top:317px">Games</div>
<div class="cat" style="top:353px">Graphics</div>
<div class="cat" style="top:389px">Internet</div>
<div class="cat" style="top:425px">Office</div>
<div class="cat" style="top:461px">Sound &amp; Video</div>
<div class="cat" style="top:497px">Universal Access</div>
<div class="cat" style="top:533px">Preferences</div>
<div class="cat" style="top:569px">Administration</div>
<div class="cat" style="top:605px">Places</div>
<div class="cat" style="top:641px">Recent Files</div>
<div class="app" style="top:216px">Archive Manager</div>
<div class="app" style="top:252px">Calculator</div>
<div class="app" style="top:288px">Files</div>
<div class="app" style="top:324px">Files</div>
<div class="app" style="top:360px">Font Viewer</div>
<div class="app" style="top:396px">gedit</div>
<div class="app" style="top:432px">Gnote</div>
<div class="app" style="top:468px">Help</div>
<div class="app" style="top:504px">Screenshot</div>
<div class="app" style="top:540px">Time Tracker</div>
<div class="app" style="top:576px">Time Tracking Overview</div>
<div id="panel"></div>
<!-- menu gear -->
<svg style="left:4px;top:745px" width="20" height="20" viewBox="0 0 20 20">
 <g stroke="#8e8e8e" stroke-width="2.3" stroke-linecap="butt">
  <path d="M10 0.8 V4.5 M10 15.5 V19.2 M0.8 10 H4.5 M15.5 10 H19.2 M3.5 3.5 L6.1 6.1 M13.9 13.9 L16.5 16.5 M16.5 3.5 L13.9 6.1 M6.1 13.9 L3.5 16.5"/>
 </g>
 <circle cx="10" cy="10" r="5" fill="none" stroke="#8e8e8e" stroke-width="2"/>
</svg>
<div class="ptxt" style="left:31px;font-weight:bold;color:#d6d6d6">Menu</div>
<!-- show desktop folder -->
<svg style="left:76px;top:746px" width="20" height="18" viewBox="0 0 20 18">
 <path d="M1.2 2.5 Q1.2 1.5 2.2 1.5 H7 Q8 1.5 8.3 2.5 L8.6 3.5 H17.5 Q18.5 3.5 18.5 4.5 V7 H1.2 Z" fill="#94805c" stroke="#6f5d3f" stroke-width="0.7"/>
 <path d="M0.8 6.5 Q0.8 5.5 1.8 5.5 H6.8 L8.6 4.3 H18.2 Q19.2 4.3 19.2 5.3 V16 Q19.2 17 18.2 17 H1.8 Q0.8 17 0.8 16 Z" fill="#c9b592" stroke="#7d6a49" stroke-width="0.7"/>
 <path d="M5 8.5 H6.5 M5 8.5 V10 M15 8.5 H13.5 M15 8.5 V10 M5 14.5 H6.5 M5 14.5 V13 M15 14.5 H13.5 M15 14.5 V13" stroke="#6a5a3e" stroke-width="0.9" fill="none"/>
 <rect x="8.2" y="9.2" width="3.6" height="4.6" fill="none" stroke="#6a5a3e" stroke-width="0.9"/>
</svg>
<!-- iceweasel small -->
<svg style="left:116.5px;top:744px" width="18.5" height="20.8" viewBox="0 0 32 36">
 <defs><radialGradient id="gl2" cx="0.45" cy="0.4" r="0.65"><stop offset="0" stop-color="#8d8ff2"/><stop offset="0.4" stop-color="#4a4bd6"/><stop offset="1" stop-color="#1a1a96"/></radialGradient></defs>
 <circle cx="16" cy="20.9" r="12.2" fill="url(#gl2)"/>
 <path d="M6.5 24 C9 30.5 18 33.5 27 27 C20 31 12 29.5 8.5 23 Z" fill="#eef0ff" opacity="0.95"/>
 <path d="M8 25 C13 30 21 30 26.5 26" stroke="#fff" stroke-width="1.8" fill="none" opacity="0.85" stroke-linecap="round"/>
 <path d="M9 14 C12 19 17 21 24 17.5 M17 10 C14.5 17 15.5 24 19 29" stroke="#b9bcff" stroke-width="1.1" fill="none" opacity="0.6"/>
 <circle cx="15.8" cy="20.3" r="1.7" fill="#fff" opacity="0.9"/><circle cx="12.2" cy="13.8" r="1" fill="#fff" opacity="0.8"/><circle cx="23.5" cy="15.5" r="0.9" fill="#fff" opacity="0.8"/>
 <path d="M6.8 20 C5.5 12 9.5 6.5 17.5 5.8 C18 3.5 20 2 21.8 3.2 C24 2.2 27.5 3 29.5 5 C31.5 6.5 31 9.5 28.5 12 C26.5 14.5 23.5 15.5 21.5 14 C19.5 12.5 19 10.5 18.5 9.2 C13.5 9 9.5 12.5 9.8 19.5 Z" fill="#fbfbff" stroke="#d4d4e6" stroke-width="0.4"/>
 <circle cx="22.8" cy="7.6" r="1" fill="#222"/><circle cx="27.3" cy="8.7" r="1" fill="#222"/><ellipse cx="24" cy="12" rx="0.9" ry="0.7" fill="#555"/>
</svg>
<!-- terminal small -->
<svg style="left:137px;top:747px" width="19" height="15" viewBox="0 0 19 15">
 <rect x="0.7" y="0.7" width="17.6" height="13.3" rx="1" fill="#cfd1cf" stroke="#8a8c8a" stroke-width="0.7"/>
 <rect x="2" y="2" width="15" height="10" fill="#252927"/>
 <path d="M10 2 L14 2 L11 12 L7 12 Z" fill="#fff" opacity="0.1"/>
 <path d="M3.3 3.5 L4.8 4.5 L3.3 5.5" stroke="#fff" stroke-width="0.8" fill="none"/><rect x="5.3" y="5.5" width="2" height="0.8" fill="#fff"/>
</svg>
<!-- folder small -->
<svg style="left:160px;top:747px" width="19" height="17" viewBox="0 0 20 18">
 <path d="M1.2 2.5 Q1.2 1.5 2.2 1.5 H7 Q8 1.5 8.3 2.5 L8.6 3.5 H17.5 Q18.5 3.5 18.5 4.5 V7 H1.2 Z" fill="#94805c" stroke="#6f5d3f" stroke-width="0.7"/>
 <path d="M0.8 6.5 Q0.8 5.5 1.8 5.5 H6.8 L8.6 4.3 H18.2 Q19.2 4.3 19.2 5.3 V16 Q19.2 17 18.2 17 H1.8 Q0.8 17 0.8 16 Z" fill="#c9b592" stroke="#7d6a49" stroke-width="0.7"/>
</svg>
<!-- tray -->
<svg style="left:1178px;top:748px" width="14" height="16" viewBox="0 0 14 16">
 <path d="M1.4 8 V12.6 H11.2 V8" fill="none" stroke="#cdcdcd" stroke-width="1.1"/>
</svg>
<svg style="left:1199px;top:748px" width="12" height="16" viewBox="0 0 12 16">
 <circle cx="5.6" cy="5.3" r="2.9" fill="#c9c9c9"/>
 <path d="M1.2 13 V10.5 Q1.2 8 3.7 8 H7.5 Q10 8 10 10.5 V13 Z" fill="#c9c9c9"/>
</svg>
<svg style="left:1218px;top:748px" width="14" height="16" viewBox="0 0 14 16">
 <path d="M5.5 2.4 H8.5 V0.8 L12.2 4 L8.5 7.2 V5.6 H5.5 Z" fill="#8c8c8c"/>
 <path d="M8.5 8.4 H5.2 V6.8 L1.2 10 L5.2 13.2 V11.6 H8.5 Z" fill="#8c8c8c"/>
 <path d="M9.3 10 L12.7 13.4 M12.7 10 L9.3 13.4" stroke="#d6d6d6" stroke-width="1.3"/>
</svg>
<svg style="left:1236px;top:748px" width="14" height="16" viewBox="0 0 14 16">
 <path d="M1 5.8 H3.2 L6.8 2.2 V13 L3.2 9.8 H1 Z" fill="#cfcfcf"/>
 <path d="M8.3 5.2 Q9.7 7.7 8.3 10.2" stroke="#cfcfcf" stroke-width="1.2" fill="none"/>
 <path d="M10.2 3.3 Q12.6 7.7 10.2 12.1" stroke="#a2a2a2" stroke-width="1.1" fill="none"/>
 <path d="M12 1.8 Q15 7.7 12 13.6" stroke="#7a7a7a" stroke-width="0.9" fill="none"/>
</svg>
<svg style="left:1259px;top:748px" width="13" height="16" viewBox="0 0 13 16">
 <path d="M1.5 2.7 H3.5 V1.2 H8 V2.7 H10 V13.8 H1.5 Z" fill="none" stroke="#cdcdcd" stroke-width="1.2" stroke-linejoin="round"/>
 <path d="M3.6 5.3 H8 M3.6 7.6 H8 M3.6 9.9 H8 M3.6 12 H7" stroke="#cdcdcd" stroke-width="1.1"/>
 <path d="M10.5 8.2 L8.3 12 H10 L8.8 15 L12 10.8 H10.3 L11.5 8.2 Z" fill="#8a8f99"/>
</svg>
<div class="ptxt" style="left:1271px;color:#c4c4c4">100%</div>
<div class="ptxt" style="left:1308px;font-weight:bold;color:#dadada">03:56</div>
<svg style="left:1349px;top:749px" width="15" height="14" viewBox="0 0 15 14">
 <rect x="1.6" y="2.8" width="8.8" height="5.4" fill="none" stroke="#d4d4d4" stroke-width="1.7"/>
 <path d="M5.3 11.2 H13.6 V5.3 H12.2" fill="none" stroke="#d4d4d4" stroke-width="1.5"/>
</svg>
</body>
</html>
